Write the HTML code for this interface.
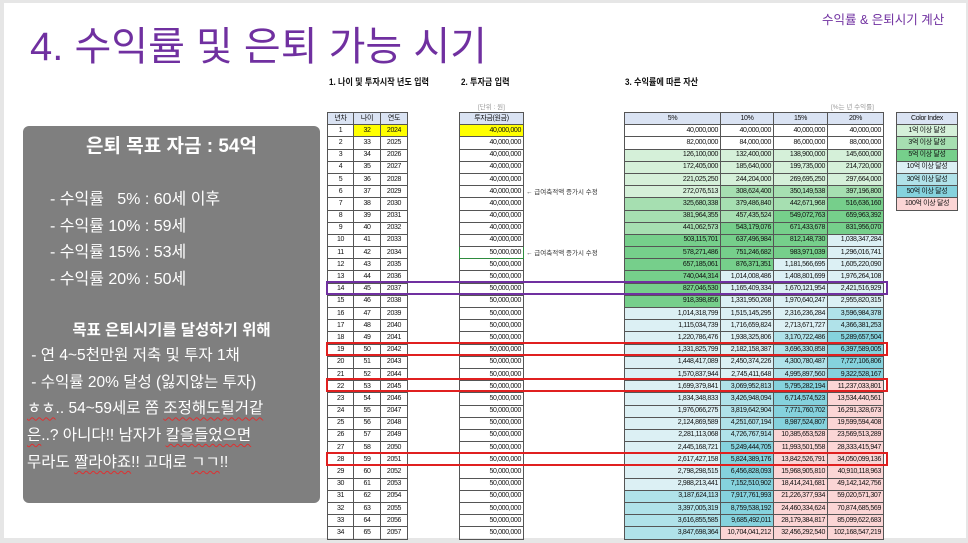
<!DOCTYPE html>
<html><head><meta charset="utf-8">
<style>
*{margin:0;padding:0;box-sizing:border-box}
body{width:968px;height:543px;background:#e6e6e6;position:relative;overflow:hidden;font-family:"Liberation Sans","Noto Sans CJK KR",sans-serif}
.slide{position:absolute;left:4px;top:3px;width:962px;height:535px;background:#fff}
.abs{position:absolute}
.title{left:30px;top:14px;font-size:40px;color:#7030a0;letter-spacing:0px;white-space:nowrap}
.tr{left:822px;top:9px;font-size:12.5px;color:#7030a0;white-space:nowrap}
.panel{left:23px;top:126px;width:297px;height:377px;background:#7f7f7f;border-radius:6px;color:#fff}
.h{font-size:9px;font-weight:bold;color:#111;white-space:nowrap;transform:scaleX(.9);transform-origin:left}
table{border-collapse:collapse;table-layout:fixed;position:absolute;font-size:7px;color:#111}
td{height:12.2px;border:1px solid #555;padding:0 2px;white-space:nowrap;letter-spacing:-.35px;line-height:10px}
td.c{text-align:center}
td.r{text-align:right}
tr.hd td{background:#dae3f3;text-align:center}
.y{background:#ffff00}
.note{font-size:6.5px;color:#333;white-space:nowrap}
.box{position:absolute;border:2px solid #e02020;height:14px}
u{text-decoration:underline wavy #e03030;text-decoration-thickness:1px;text-underline-offset:3px}
</style></head><body>
<div class="slide"></div>
<div class="abs title">4. 수익률 및 은퇴 가능 시기</div>
<div class="abs tr">수익률 &amp; 은퇴시기 계산</div>

<div class="abs panel">
 <div class="abs" style="left:0;width:297px;top:5px;text-align:center;font-size:19px;font-weight:bold">은퇴 목표 자금 : 54억</div>
 <div class="abs" style="left:27px;top:61px;font-size:16px;line-height:26.5px;white-space:nowrap">- 수익률&nbsp;&nbsp;&nbsp;5% : 60세 이후<br>- 수익률 10% : 59세<br>- 수익률 15% : 53세<br>- 수익률 20% : 50세</div>
 <div class="abs" style="left:0;width:297px;top:192px;text-align:center;font-size:15.5px;font-weight:bold">목표 은퇴시기를 달성하기 위해</div>
 <div class="abs" style="left:4px;top:217px;font-size:15.5px;line-height:26.7px;white-space:nowrap">&nbsp;- 연 4~5천만원 저축 및 투자 1채<br>&nbsp;- 수익률 20% 달성 (잃지않는 투자)<br><u>ㅎㅎ</u>.. 54~59세로 쫌 <u>조정해도될거같</u><br><u>은</u>..? 아니다!! 남자가 <u>칼을들었으면</u><br>무라도 <u>짤라야죠</u>!! 고대로 <u>ㄱㄱ</u>!!</div>
</div>

<div class="abs h" style="left:329px;top:75px">1. 나이 및 투자시작 년도 입력</div>
<div class="abs h" style="left:461px;top:75px">2. 투자금 입력</div>
<div class="abs h" style="left:625px;top:75px">3. 수익률에 따른 자산</div>
<div class="abs note" style="left:478px;top:101px;color:#999">[단위 : 원]</div>
<div class="abs note" style="left:831px;top:101px;color:#999">[%는 년 수익률]</div>
<div class="abs note" style="left:526px;top:186px">← 급여축적액 증가시 수정</div>
<div class="abs note" style="left:526px;top:247px">← 급여축적액 증가시 수정</div>

<table style="left:327px;top:112px;width:80px">
<colgroup><col style="width:26px"><col style="width:27px"><col style="width:27px"></colgroup>
<tr class="hd"><td>년차</td><td>나이</td><td>연도</td></tr>
<tr><td class="c">1</td><td class="c y">32</td><td class="c y">2024</td></tr>
<tr><td class="c">2</td><td class="c">33</td><td class="c">2025</td></tr>
<tr><td class="c">3</td><td class="c">34</td><td class="c">2026</td></tr>
<tr><td class="c">4</td><td class="c">35</td><td class="c">2027</td></tr>
<tr><td class="c">5</td><td class="c">36</td><td class="c">2028</td></tr>
<tr><td class="c">6</td><td class="c">37</td><td class="c">2029</td></tr>
<tr><td class="c">7</td><td class="c">38</td><td class="c">2030</td></tr>
<tr><td class="c">8</td><td class="c">39</td><td class="c">2031</td></tr>
<tr><td class="c">9</td><td class="c">40</td><td class="c">2032</td></tr>
<tr><td class="c">10</td><td class="c">41</td><td class="c">2033</td></tr>
<tr><td class="c">11</td><td class="c">42</td><td class="c">2034</td></tr>
<tr><td class="c">12</td><td class="c">43</td><td class="c">2035</td></tr>
<tr><td class="c">13</td><td class="c">44</td><td class="c">2036</td></tr>
<tr><td class="c">14</td><td class="c">45</td><td class="c">2037</td></tr>
<tr><td class="c">15</td><td class="c">46</td><td class="c">2038</td></tr>
<tr><td class="c">16</td><td class="c">47</td><td class="c">2039</td></tr>
<tr><td class="c">17</td><td class="c">48</td><td class="c">2040</td></tr>
<tr><td class="c">18</td><td class="c">49</td><td class="c">2041</td></tr>
<tr><td class="c">19</td><td class="c">50</td><td class="c">2042</td></tr>
<tr><td class="c">20</td><td class="c">51</td><td class="c">2043</td></tr>
<tr><td class="c">21</td><td class="c">52</td><td class="c">2044</td></tr>
<tr><td class="c">22</td><td class="c">53</td><td class="c">2045</td></tr>
<tr><td class="c">23</td><td class="c">54</td><td class="c">2046</td></tr>
<tr><td class="c">24</td><td class="c">55</td><td class="c">2047</td></tr>
<tr><td class="c">25</td><td class="c">56</td><td class="c">2048</td></tr>
<tr><td class="c">26</td><td class="c">57</td><td class="c">2049</td></tr>
<tr><td class="c">27</td><td class="c">58</td><td class="c">2050</td></tr>
<tr><td class="c">28</td><td class="c">59</td><td class="c">2051</td></tr>
<tr><td class="c">29</td><td class="c">60</td><td class="c">2052</td></tr>
<tr><td class="c">30</td><td class="c">61</td><td class="c">2053</td></tr>
<tr><td class="c">31</td><td class="c">62</td><td class="c">2054</td></tr>
<tr><td class="c">32</td><td class="c">63</td><td class="c">2055</td></tr>
<tr><td class="c">33</td><td class="c">64</td><td class="c">2056</td></tr>
<tr><td class="c">34</td><td class="c">65</td><td class="c">2057</td></tr>
</table>

<table style="left:459px;top:112px;width:65px">
<tr class="hd"><td>투자금(원금)</td></tr>
<tr><td class="r y">40,000,000</td></tr>
<tr><td class="r">40,000,000</td></tr><tr><td class="r">40,000,000</td></tr><tr><td class="r">40,000,000</td></tr>
<tr><td class="r">40,000,000</td></tr><tr><td class="r">40,000,000</td></tr><tr><td class="r">40,000,000</td></tr>
<tr><td class="r">40,000,000</td></tr><tr><td class="r">40,000,000</td></tr><tr><td class="r">40,000,000</td></tr>
<tr><td class="r" style="border:1px solid #2e8b3e">50,000,000</td></tr>
<tr><td class="r">50,000,000</td></tr><tr><td class="r">50,000,000</td></tr><tr><td class="r">50,000,000</td></tr>
<tr><td class="r">50,000,000</td></tr><tr><td class="r">50,000,000</td></tr><tr><td class="r">50,000,000</td></tr>
<tr><td class="r">50,000,000</td></tr><tr><td class="r">50,000,000</td></tr><tr><td class="r">50,000,000</td></tr>
<tr><td class="r">50,000,000</td></tr><tr><td class="r">50,000,000</td></tr><tr><td class="r">50,000,000</td></tr>
<tr><td class="r">50,000,000</td></tr><tr><td class="r">50,000,000</td></tr><tr><td class="r">50,000,000</td></tr>
<tr><td class="r">50,000,000</td></tr><tr><td class="r">50,000,000</td></tr><tr><td class="r">50,000,000</td></tr>
<tr><td class="r">50,000,000</td></tr><tr><td class="r">50,000,000</td></tr><tr><td class="r">50,000,000</td></tr>
<tr><td class="r">50,000,000</td></tr><tr><td class="r">50,000,000</td></tr>
</table>

<table id="assets" style="left:624px;top:112px;width:259px">
<colgroup><col style="width:96px"><col style="width:53px"><col style="width:54px"><col style="width:56px"></colgroup>
<tr class="hd"><td>5%</td><td>10%</td><td>15%</td><td>20%</td></tr>
<tr><td class="r v">40,000,000</td><td class="r v">40,000,000</td><td class="r v">40,000,000</td><td class="r v">40,000,000</td></tr>
<tr><td class="r v">82,000,000</td><td class="r v">84,000,000</td><td class="r v">86,000,000</td><td class="r v">88,000,000</td></tr>
<tr><td class="r v">126,100,000</td><td class="r v">132,400,000</td><td class="r v">138,900,000</td><td class="r v">145,600,000</td></tr>
<tr><td class="r v">172,405,000</td><td class="r v">185,640,000</td><td class="r v">199,735,000</td><td class="r v">214,720,000</td></tr>
<tr><td class="r v">221,025,250</td><td class="r v">244,204,000</td><td class="r v">269,695,250</td><td class="r v">297,664,000</td></tr>
<tr><td class="r v">272,076,513</td><td class="r v">308,624,400</td><td class="r v">350,149,538</td><td class="r v">397,196,800</td></tr>
<tr><td class="r v">325,680,338</td><td class="r v">379,486,840</td><td class="r v">442,671,968</td><td class="r v">516,636,160</td></tr>
<tr><td class="r v">381,964,355</td><td class="r v">457,435,524</td><td class="r v">549,072,763</td><td class="r v">659,963,392</td></tr>
<tr><td class="r v">441,062,573</td><td class="r v">543,179,076</td><td class="r v">671,433,678</td><td class="r v">831,956,070</td></tr>
<tr><td class="r v">503,115,701</td><td class="r v">637,496,984</td><td class="r v">812,148,730</td><td class="r v">1,038,347,284</td></tr>
<tr><td class="r v">578,271,486</td><td class="r v">751,246,682</td><td class="r v">983,971,039</td><td class="r v">1,296,016,741</td></tr>
<tr><td class="r v">657,185,061</td><td class="r v">876,371,351</td><td class="r v">1,181,566,695</td><td class="r v">1,605,220,090</td></tr>
<tr><td class="r v">740,044,314</td><td class="r v">1,014,008,486</td><td class="r v">1,408,801,699</td><td class="r v">1,976,264,108</td></tr>
<tr><td class="r v">827,046,530</td><td class="r v">1,165,409,334</td><td class="r v">1,670,121,954</td><td class="r v">2,421,516,929</td></tr>
<tr><td class="r v">918,398,856</td><td class="r v">1,331,950,268</td><td class="r v">1,970,640,247</td><td class="r v">2,955,820,315</td></tr>
<tr><td class="r v">1,014,318,799</td><td class="r v">1,515,145,295</td><td class="r v">2,316,236,284</td><td class="r v">3,596,984,378</td></tr>
<tr><td class="r v">1,115,034,739</td><td class="r v">1,716,659,824</td><td class="r v">2,713,671,727</td><td class="r v">4,366,381,253</td></tr>
<tr><td class="r v">1,220,786,476</td><td class="r v">1,938,325,806</td><td class="r v">3,170,722,486</td><td class="r v">5,289,657,504</td></tr>
<tr><td class="r v">1,331,825,799</td><td class="r v">2,182,158,387</td><td class="r v">3,696,330,858</td><td class="r v">6,397,589,005</td></tr>
<tr><td class="r v">1,448,417,089</td><td class="r v">2,450,374,226</td><td class="r v">4,300,780,487</td><td class="r v">7,727,106,806</td></tr>
<tr><td class="r v">1,570,837,944</td><td class="r v">2,745,411,648</td><td class="r v">4,995,897,560</td><td class="r v">9,322,528,167</td></tr>
<tr><td class="r v">1,699,379,841</td><td class="r v">3,069,952,813</td><td class="r v">5,795,282,194</td><td class="r v">11,237,033,801</td></tr>
<tr><td class="r v">1,834,348,833</td><td class="r v">3,426,948,094</td><td class="r v">6,714,574,523</td><td class="r v">13,534,440,561</td></tr>
<tr><td class="r v">1,976,066,275</td><td class="r v">3,819,642,904</td><td class="r v">7,771,760,702</td><td class="r v">16,291,328,673</td></tr>
<tr><td class="r v">2,124,869,589</td><td class="r v">4,251,607,194</td><td class="r v">8,987,524,807</td><td class="r v">19,599,594,408</td></tr>
<tr><td class="r v">2,281,113,068</td><td class="r v">4,726,767,914</td><td class="r v">10,385,653,528</td><td class="r v">23,569,513,289</td></tr>
<tr><td class="r v">2,445,168,721</td><td class="r v">5,249,444,705</td><td class="r v">11,993,501,558</td><td class="r v">28,333,415,947</td></tr>
<tr><td class="r v">2,617,427,158</td><td class="r v">5,824,389,176</td><td class="r v">13,842,526,791</td><td class="r v">34,050,099,136</td></tr>
<tr><td class="r v">2,798,298,515</td><td class="r v">6,456,828,093</td><td class="r v">15,968,905,810</td><td class="r v">40,910,118,963</td></tr>
<tr><td class="r v">2,988,213,441</td><td class="r v">7,152,510,902</td><td class="r v">18,414,241,681</td><td class="r v">49,142,142,756</td></tr>
<tr><td class="r v">3,187,624,113</td><td class="r v">7,917,761,993</td><td class="r v">21,226,377,934</td><td class="r v">59,020,571,307</td></tr>
<tr><td class="r v">3,397,005,319</td><td class="r v">8,759,538,192</td><td class="r v">24,460,334,624</td><td class="r v">70,874,685,569</td></tr>
<tr><td class="r v">3,616,855,585</td><td class="r v">9,685,492,011</td><td class="r v">28,179,384,817</td><td class="r v">85,099,622,683</td></tr>
<tr><td class="r v">3,847,698,364</td><td class="r v">10,704,041,212</td><td class="r v">32,456,292,540</td><td class="r v">102,168,547,219</td></tr>
</table>

<table style="left:896px;top:112px;width:62px">
<tr class="hd"><td>Color Index</td></tr>
<tr><td class="c" style="background:#d5f0d9">1억 이상 달성</td></tr>
<tr><td class="c" style="background:#a6dfb1">3억 이상 달성</td></tr>
<tr><td class="c" style="background:#76cf8b">5억 이상 달성</td></tr>
<tr><td class="c" style="background:#dcf0f4">10억 이상 달성</td></tr>
<tr><td class="c" style="background:#b0e2e9">30억 이상 달성</td></tr>
<tr><td class="c" style="background:#85d2dd">50억 이상 달성</td></tr>
<tr><td class="c" style="background:#fbd5d5">100억 이상 달성</td></tr>
</table>

<div class="box" style="left:326px;top:281px;width:562px;border-color:#7030a0"></div>
<div class="box" style="left:326px;top:342px;width:562px"></div>
<div class="box" style="left:326px;top:378px;width:562px"></div>
<div class="box" style="left:326px;top:452px;width:562px"></div>

<script>
document.querySelectorAll('#assets td.v').forEach(function(td){
 var n=parseInt(td.textContent.replace(/,/g,''),10)/1e8,c='#fff';
 if(n>=100)c='#fbd5d5';else if(n>=50)c='#85d2dd';else if(n>=30)c='#b0e2e9';else if(n>=10)c='#dcf0f4';
 else if(n>=5)c='#76cf8b';else if(n>=3)c='#a6dfb1';else if(n>=1)c='#d5f0d9';
 td.style.background=c;
});
</script>
</body></html>
